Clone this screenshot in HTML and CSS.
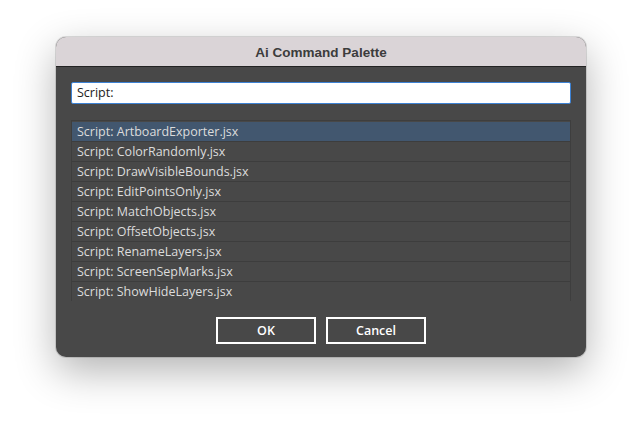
FILE: index.html
```html
<!DOCTYPE html>
<html>
<head>
<meta charset="utf-8">
<link rel="stylesheet" href="styles.css">
</head>
<body>
<div class="dialog">
  <div class="titlebar">Ai Command Palette</div>
  <div class="content">
    <div class="search">Script:</div>
    <ul class="list">
      <li class="row selected">Script: ArtboardExporter.jsx</li>
      <li class="row">Script: ColorRandomly.jsx</li>
      <li class="row">Script: DrawVisibleBounds.jsx</li>
      <li class="row">Script: EditPointsOnly.jsx</li>
      <li class="row">Script: MatchObjects.jsx</li>
      <li class="row">Script: OffsetObjects.jsx</li>
      <li class="row">Script: RenameLayers.jsx</li>
      <li class="row">Script: ScreenSepMarks.jsx</li>
      <li class="row">Script: ShowHideLayers.jsx</li>
    </ul>
    <div class="buttons">
      <div class="btn">OK</div>
      <div class="btn">Cancel</div>
    </div>
  </div>
</div>
</body>
</html>
```
FILE: styles.css
```css
html, body {
  margin: 0;
  padding: 0;
  background: #ffffff;
  width: 642px;
  height: 432px;
  overflow: hidden;
}
body {
  padding: 37px 0 0 56px;
  box-sizing: border-box;
  font-family: "Open Sans", "DejaVu Sans", sans-serif;
}
.dialog {
  width: 530px;
  height: 320px;
  border-radius: 10px;
  overflow: hidden;
  background: #484848;
  box-shadow: 0 14px 40px rgba(0,0,0,0.3), 0 0 0 1px rgba(0,0,0,0.12);
  display: flex;
  flex-direction: column;
}
.titlebar {
  height: 28px;
  background: #dad4d7;
  border-bottom: 1px solid #232323;
  display: flex;
  align-items: center;
  justify-content: center;
  font-family: "Liberation Sans", Arial, sans-serif;
  font-weight: bold;
  font-size: 13.5px;
  color: #3c3c3c;
  padding-top: 1px;
}
.content {
  padding: 15px 15px 0 15px;
  display: flex;
  flex-direction: column;
}
.search {
  height: 22px;
  box-sizing: border-box;
  background: #ffffff;
  border: 1px solid #3d82d4;
  border-radius: 2px;
  font-size: 12.5px;
  color: #222;
  line-height: 20px;
  padding-left: 5px;
}
.list {
  list-style: none;
  margin: 16px 0 0 0;
  padding: 1px 0 0 0;
  border: 1px solid #3e3e3e;
  border-bottom-width: 0;
  height: 181px;
  box-sizing: border-box;
  overflow: hidden;
}
.row {
  height: 20px;
  box-sizing: border-box;
  border-bottom: 1px solid #3d3d3d;
  font-size: 12.5px;
  line-height: 19px;
  color: #dcdcdc;
  padding-left: 5px;
}
.row.selected {
  background: #42576f;
}
.buttons {
  display: flex;
  justify-content: center;
  gap: 10px;
  margin-top: 16px;
}
.btn {
  width: 100px;
  height: 27px;
  box-sizing: border-box;
  border: 2px solid #ffffff;
  color: #ffffff;
  font-size: 12.5px;
  font-weight: 600;
  display: flex;
  align-items: center;
  justify-content: center;
}
```
